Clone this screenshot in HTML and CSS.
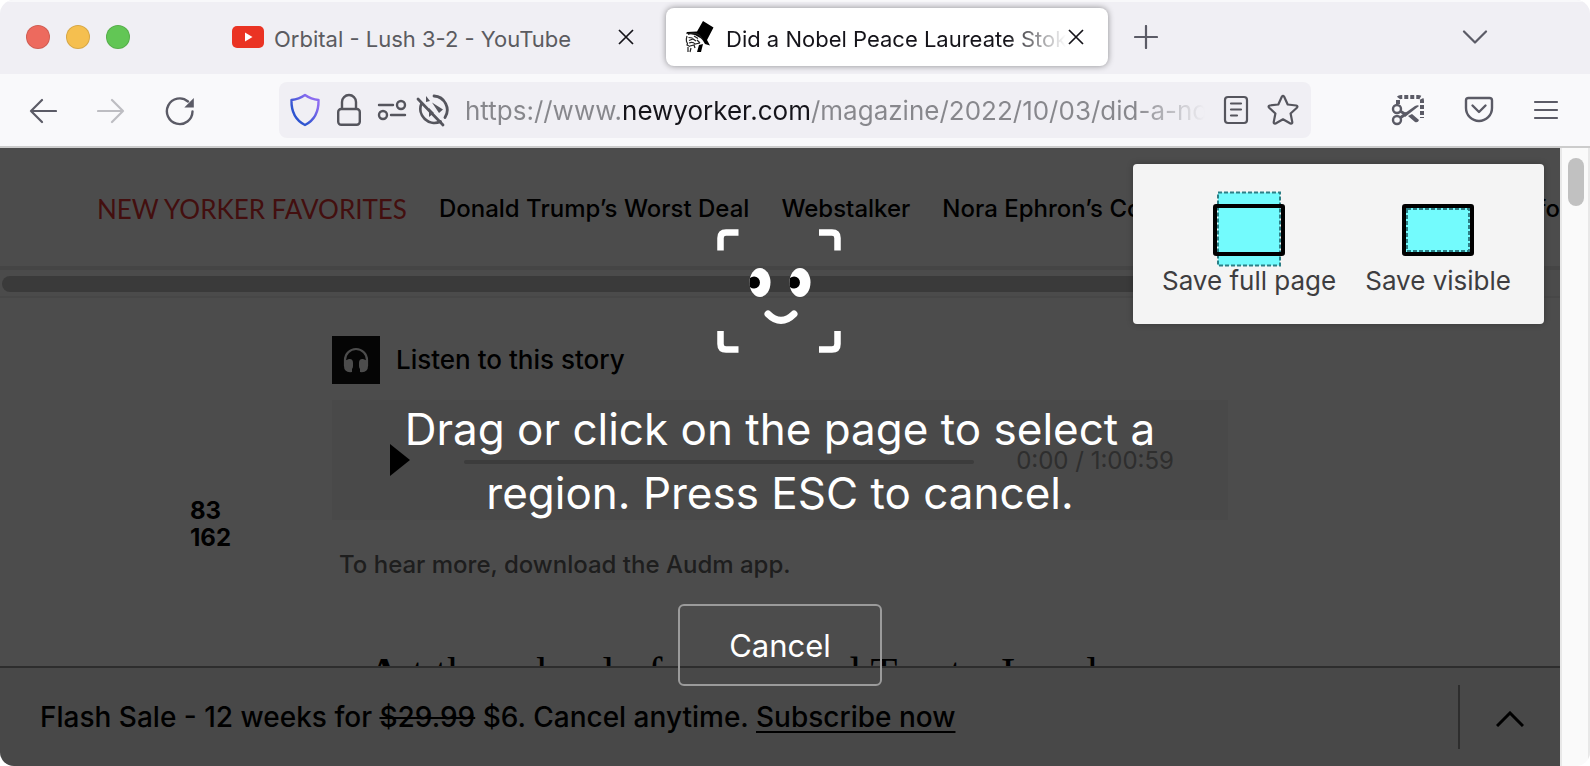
FILE: index.html
```html
<!DOCTYPE html>
<html lang="en">
<head>
<meta charset="utf-8">
<title>Did a Nobel Peace Laureate Stoke a Civil War?</title>
<link rel="stylesheet" href="styles.css">
</head>
<body>
<div class="window">
  <header class="tabbar">
    <div class="lights"><span class="light red"></span><span class="light yellow"></span><span class="light green"></span></div>
    <div class="tab">
      <svg class="fav" width="32" height="32" viewBox="0 0 32 32"><rect y="5" width="32" height="22" rx="5" fill="#ea3323"/><path d="M13 11.500v9l7.500-4.500z" fill="#fff"/></svg>
      <span class="tab-title">Orbital - Lush 3-2 - YouTube</span>
      <button class="icon-btn" aria-label="Close tab"><svg width="16" height="16" viewBox="0 0 16 16" stroke="#15141a" stroke-width="1.700"><path d="M1 1l14 14M15 1L1 15"/></svg></button>
    </div>
    <div class="tab active">
      <svg class="fav" width="32" height="32" viewBox="0 0 32 32"><path d="M19 0l10.500 6.500L23 19l3 5.500-5-1.500-3-5-7-4-9-1.500 1-1.500 10-.5z"/><path d="M4 13.500q6-3 11 .5l4 5M3 15q-1 3-.5 5.500l1 2L3 24l3 1.500M4.500 16.500l4 .5M5 19.500l4-1.500 3 2M10 15l4 2.500M5 22q4-1.500 6 1l5-1M13 19l3 3M6 25l4-1 1 3M4 26v5M7 27l-1 4" fill="none" stroke="#222" stroke-width="1.200"/><path d="M15 24l4-1-2 8h-4z"/></svg>
      <span class="tab-title">Did a Nobel Peace Laureate Stoke a Civil War?</span>
      <button class="icon-btn" aria-label="Close tab"><svg width="16" height="16" viewBox="0 0 16 16" stroke="#15141a" stroke-width="1.700"><path d="M1 1l14 14M15 1L1 15"/></svg></button>
    </div>
    <button class="icon-btn new-tab" aria-label="New tab"><svg width="24" height="24" viewBox="0 0 24 24" stroke="#5b5b66" stroke-width="2.200" stroke-linecap="round"><path d="M12 1v22M1 12h22"/></svg></button>
    <button class="icon-btn all-tabs" aria-label="List all tabs"><svg width="26" height="14" viewBox="0 0 26 14" fill="none" stroke="#5b5b66" stroke-width="2.200" stroke-linecap="round" stroke-linejoin="round"><path d="M2 1.500l11 11 11-11"/></svg></button>
  </header>

  <div class="toolbar">
    <div class="nav-buttons">
      <button class="icon-btn" aria-label="Back"><svg width="28" height="28" viewBox="0 0 28 28" fill="none" stroke="#5b5b66" stroke-width="2.200" stroke-linecap="round" stroke-linejoin="round"><path d="M27 14H2M13 3L2 14l11 11"/></svg></button>
      <button class="icon-btn" aria-label="Forward" disabled><svg width="28" height="28" viewBox="0 0 28 28" fill="none" stroke="#bdbdc2" stroke-width="2.200" stroke-linecap="round" stroke-linejoin="round"><path d="M1 14h25M15 3l11 11-11 11"/></svg></button>
      <button class="icon-btn" aria-label="Reload"><svg width="30" height="30" viewBox="0 0 30 30" fill="none" stroke="#5b5b66" stroke-width="2.400" stroke-linecap="round"><path d="M27.500 15.500A12.800 12.800 0 1 1 23 5.500"/><path d="M28.800 2v9.500h-9.500z" fill="#5b5b66" stroke="none"/></svg></button>
    </div>
    <div class="urlbar">
      <svg width="32" height="34" viewBox="0 0 32 34" fill="none"><defs><linearGradient id="sh" x1="1" y1="0" x2="0" y2="1"><stop offset=".2" stop-color="#8b6bf0"/><stop offset=".7" stop-color="#2f55d0"/></linearGradient></defs><path d="M16 2c4 2.800 8.500 4.500 13.500 5 .3 12-3.500 20-13.500 25C6 27 2.200 19 2.500 7 7.500 6.500 12 4.800 16 2z" stroke="url(#sh)" stroke-width="2.400" stroke-linejoin="round"/></svg>
      <svg width="26" height="34" viewBox="0 0 26 34" fill="none" stroke="#55555d" stroke-width="2.400"><rect x="2.200" y="16" width="21.600" height="15.800" rx="3"/><path d="M6 16V9a7 7 0 0 1 14 0v7"/></svg>
      <svg width="30" height="34" viewBox="0 0 30 34" fill="none" stroke="#55555d" stroke-width="2.400" stroke-linecap="round"><path d="M2 12h14M14 22h14"/><circle cx="24" cy="12" r="4"/><circle cx="6" cy="22" r="4"/></svg>
      <svg width="34" height="34" viewBox="0 0 34 34" fill="none" stroke="#55555d" stroke-width="2.800" stroke-linecap="round"><path d="M18 3A14 14 0 0 1 29 24.500M24.500 28.500A14 14 0 0 1 5.500 10.500"/><path d="M10 3v6l4-1z" fill="#55555d" stroke="none"/><path d="M2 6l25 26"/><path d="M16 9.500l11 7-4 3.500zM13 15v9l5-4z" fill="#55555d" stroke="none"/></svg>
      <input class="url" type="text" aria-label="Address" value="https://www.newyorker.com/magazine/2022/10/03/did-a-nobel-peace-laureate-stoke-a-civil-war">
      <svg width="26" height="30" viewBox="0 0 26 30" fill="none" stroke="#55555d" stroke-width="2.200" stroke-linecap="round"><rect x="2" y="2" width="22" height="26" rx="3"/><path d="M8 8.500h10M8 14.500h10M8 20.500h6"/></svg>
      <svg class="star" width="32" height="32" viewBox="0 0 32 32" fill="none" stroke="#55555d" stroke-width="2.200" stroke-linejoin="round"><path d="M14.800 2.800q1.200-1.800 2.400 0l3.500 7.700 8.500 1q2 .5.700 2.200l-6.300 5.800 1.700 8.600q.1 2-1.900 1.400L16 25.300l-7.400 4.200q-2 .6-1.900-1.400l1.700-8.600-6.300-5.800q-1.300-1.700.7-2.200l8.500-1z"/></svg>
    </div>
    <div class="tools">
      <button class="icon-btn" aria-label="Take screenshot"><svg width="34" height="32" viewBox="0 0 34 32" fill="none" stroke="#5b5b66"><path d="M7 10V6q0-3 3-3h17q4 0 4 4v17" stroke-width="4" stroke-dasharray="4 2"/><circle cx="6" cy="15" r="4" stroke-width="2.400"/><circle cx="6" cy="26" r="4" stroke-width="2.400"/><path d="M9 17l5 3M9 24l7-5" stroke-width="3"/><path d="M12 20.500L24 12q3-1.500 4 0L14 23zM17 22l4-2 7 6q-1 3-4 2z" fill="#5b5b66" stroke="none"/></svg></button>
      <button class="icon-btn" aria-label="Save to Pocket"><svg width="30" height="28" viewBox="0 0 30 28" fill="none" stroke="#5b5b66" stroke-width="2.400" stroke-linecap="round" stroke-linejoin="round"><path d="M4.500 2h21q2.500 0 2.500 2.500V12a13 13 0 0 1-26 0V4.500Q2 2 4.500 2z"/><path d="M8.500 9.500L15 16l6.500-6.500"/></svg></button>
      <button class="icon-btn" aria-label="Menu"><svg width="26" height="22" viewBox="0 0 26 22" stroke="#5b5b66" stroke-width="2.200" stroke-linecap="round"><path d="M2 3h22M2 11h22M2 19h22"/></svg></button>
    </div>
  </div>

  <div class="viewport">
    <main class="page">
      <nav class="favorites">
        <span class="fav-label">NEW YORKER FAVORITES</span>
        <a href="#">Donald Trump’s Worst Deal</a>
        <a href="#">Webstalker</a>
        <a href="#">Nora Ephron’s Cookbooks</a>
        <a href="#" class="last">Comfo</a>
      </nav>
      <div class="hscroll"><div class="hthumb"></div></div>
      <div class="story">
        <aside class="counts">83<br>162</aside>
        <article class="article">
          <h2 class="listen">
            <svg width="48" height="48" viewBox="0 0 48 48"><rect width="48" height="48" fill="#111"/><path d="M13 30v-6a11 11 0 0 1 22 0v6" fill="none" stroke="#fff" stroke-width="2.200"/><path d="M12 25l5-2q4-.5 4 4v3q0 2-1 3v3q-8 1-8-6zM36 25l-5-2q-4-.5-4 4v3q0 2 1 3v3q8 1 8-6z" fill="#fff"/></svg>
            Listen to this story
          </h2>
          <div class="player">
            <button class="icon-btn" aria-label="Play"><svg width="20" height="32" viewBox="0 0 20 32"><path d="M0 0l20 16L0 32z"/></svg></button>
            <div class="track"></div>
            <span class="time">0:00 / 1:00:59</span>
          </div>
          <p class="more">To hear more, download the Audm app.</p>
          <p class="lede"><span class="cap">A</span>t the school of severe and Trusts, Israel</p>
        </article>
      </div>
      <footer class="sale">
        <p>Flash Sale - 12 weeks for <s>$29.99</s> $6. Cancel anytime. <a href="#">Subscribe now</a></p>
        <button class="icon-btn expand" aria-label="Expand offer"><svg width="28" height="16" viewBox="0 0 28 16" fill="none" stroke="#000" stroke-width="3"><path d="M1 15L14 2l13 13"/></svg></button>
      </footer>
    </main>
    <div class="scrollbar"><div class="vthumb"></div></div>

    <div class="overlay">
      <svg width="126" height="124" viewBox="0 0 126 124" fill="none" stroke="#fff">
        <path d="M3.500 21.500V9q0-5.500 5.500-5.500h12.500M102 3.500h13q5.500 0 5.500 5.500v12.500M3.500 102v13q0 5.500 5.500 5.500h12.500M120.500 102v13q0 5.500-5.500 5.500h-13" stroke-width="6.500"/>
        <g stroke="none"><ellipse cx="43" cy="53.500" rx="10.500" ry="14.500" fill="#fff"/><ellipse cx="83" cy="53.500" rx="10.500" ry="14.500" fill="#fff"/><path d="M33 49a6 6 0 1 1 0 9q-1-4 0-9zM73 49a6 6 0 1 1 0 9q-1-4 0-9z" fill="#000"/></g>
        <path d="M51 85q13 13 26 0" stroke-width="7" stroke-linecap="round"/>
      </svg>
      <p class="hint">Drag or click on the page to select a region. Press ESC to cancel.</p>
      <button class="cancel">Cancel</button>
    </div>
    <div class="panel">
      <button class="save"><svg width="72" height="76" viewBox="0 0 72 76"><rect x="5" y="1.500" width="62" height="73" fill="#73fbfd" stroke="#2c7f86" stroke-width="2" stroke-dasharray="4 2"/><rect x="2" y="15" width="68" height="48" rx="1" fill="none" stroke="#000" stroke-width="4"/></svg>Save full page</button>
      <button class="save"><svg width="72" height="76" viewBox="0 0 72 76"><rect x="2" y="15" width="68" height="48" rx="1" fill="#73fbfd" stroke="#000" stroke-width="4"/><rect x="5" y="18" width="62" height="42" fill="none" stroke="#2c7f86" stroke-width="2" stroke-dasharray="4 2"/></svg>Save visible</button>
    </div>
  </div>
</div>
</body>
</html>
```
FILE: styles.css
```css
* { box-sizing: border-box; }
body { margin: 0; background: #fff; font-family: Inter, "Liberation Sans", sans-serif; color: #000; }
p, h2 { margin: 0; }
svg { display: block; flex: none; }
button { font: inherit; cursor: pointer; }
.icon-btn { display: flex; padding: 0; border: 0; background: none; }

.window { display: flex; flex-direction: column; height: 100vh; border-radius: 14px; overflow: hidden; }

.tabbar { display: flex; align-items: center; height: 74px; flex: none; background: #f0eff4; border-top: 2px solid #f8f8fa; padding: 0 0 2px 26px; }
.lights { display: flex; gap: 16px; width: 188px; }
.light { width: 24px; height: 24px; border-radius: 50%; border: 1px solid #0000001f; }
.red { background: #ed6a5e; }
.yellow { background: #f5bf4f; }
.green { background: #62c655; }
.tab { display: flex; align-items: center; width: 442px; height: 58px; padding: 0 22px 0 18px; border-radius: 8px; font-size: 22px; color: #5b5b60; }
.tab .fav { margin-right: 10px; }
.tab .icon-btn { margin-left: 2px; }
.tab-title { flex: 1; min-width: 0; padding-top: 3px; overflow: hidden; white-space: nowrap; line-height: 32px; }
.active { margin-left: 10px; padding-right: 24px; background: #fff; color: #15141a; box-shadow: 0 0 6px #0000006b; }
.active .tab-title { mask-image: linear-gradient(to left, transparent, #000 60px); }
.new-tab { margin-left: 26px; }
.all-tabs { margin-left: auto; margin-right: 102px; }

.toolbar { display: flex; align-items: center; height: 74px; flex: none; background: #f9f9fb; border-bottom: 2px solid #ccc; padding: 0 31px 0 29px; }
.nav-buttons { display: flex; align-items: center; gap: 40px; width: 250px; padding-top: 2px; }
.urlbar { flex: 1; min-width: 0; display: flex; align-items: center; gap: 15px; height: 56px; padding: 0 12px 0 10px; border-radius: 8px; background: #f0eff4; }
.urlbar svg:nth-of-type(4) { margin-left: -6px; }
.urlbar .star { margin-left: 3px; }
.url { flex: 1; min-width: 0; padding: 2px 0 0; border: 0; font: 26px/36px Inter, "Liberation Sans", sans-serif; color: transparent; background: linear-gradient(to right, #87878c 156px, #15141a 156px 346px, #87878c 346px 670px, transparent 740px); background-clip: text; -webkit-background-clip: text; outline: 0; }
.tools { display: flex; align-items: center; justify-content: flex-end; gap: 39px; width: 248px; }

.viewport { position: relative; flex: 1; min-height: 0; display: flex; }
.page { flex: 1; min-width: 0; display: flex; flex-direction: column; background: #fff; }
.scrollbar { width: 30px; padding: 10px 4px 0 6px; background: #fafafa; border: solid #e8e8e8; border-width: 0 2px; }
.vthumb { width: 16px; height: 48px; border-radius: 8px; background: #c1c1c1; }

.favorites { display: flex; align-items: center; gap: 32px; height: 122px; flex: none; padding: 3px 0 0 97px; border-bottom: 4px solid #e6e6e6; overflow: hidden; white-space: nowrap; font-size: 24px; font-weight: 500; }
.favorites a { color: #000; text-decoration: none; }
.fav-label { font-family: Lato, sans-serif; font-weight: 400; font-size: 26px; color: #df3333; }
.favorites .last { margin-left: auto; }
.hscroll { height: 28px; flex: none; padding: 6px 2px; background: #fafafa; border-bottom: 2px solid #ededed; }
.hthumb { width: 80%; height: 16px; border-radius: 8px; background: #c1c1c1; }

.story { flex: 1; min-height: 0; overflow: hidden; display: flex; padding: 38px 0 0 190px; }
.counts { width: 142px; padding-top: 161px; font-size: 24px; line-height: 27px; font-weight: 700; }
.article { width: 896px; }
.listen { display: flex; align-items: center; gap: 16px; font-size: 26px; line-height: 44px; font-weight: 500; }
.player { display: flex; align-items: center; height: 120px; margin-top: 16px; padding: 0 54px 0 58px; background: #f3f3f3; }
.track { flex: 1; height: 4px; margin: 4px 42px 0 54px; border-radius: 2px; background: #c8c8c8; }
.time { font-size: 24px; color: #999; }
.more { padding: 28px 7px; font-size: 24px; line-height: 34px; font-weight: 500; color: #676767; }
.lede { padding-left: 36px; margin-top: 34px; font: 44px/60px "Liberation Serif", serif; white-space: nowrap; }
.cap { margin-right: 12px; font-weight: 700; }

.sale { display: flex; align-items: center; justify-content: space-between; height: 100px; flex: none; padding-left: 40px; background: #f0f0f0; border-top: 2px solid #969696; font-size: 28px; font-weight: 500; }
.sale a { color: #000; text-underline-offset: 4px; text-decoration-thickness: 2px; }
.sale s { text-decoration-thickness: 2px; }
.expand { align-items: center; justify-content: center; width: 102px; height: 64px; padding-top: 4px; border-left: 2px solid #969696; }

.overlay { position: absolute; inset: 0 30px 0 0; display: flex; flex-direction: column; align-items: center; padding-top: 81px; background: rgba(0, 0, 0, 0.7); color: #fff; }
.hint { width: 800px; max-width: 100%; margin-top: 44px; text-align: center; font-size: 44px; line-height: 64px; }
.cancel { width: 204px; height: 82px; margin-top: 79px; border: 2px solid #9b9b9b; border-radius: 6px; background: none; color: #fff; font-size: 31px; }
.panel { position: absolute; top: 16px; right: 46px; display: flex; gap: 29px; padding: 27px 33px 0 29px; height: 160px; border-radius: 4px; background: #f4f4f4; box-shadow: 0 0 6px #00000040; }
.save { display: flex; flex-direction: column; align-items: center; padding: 0; border: 0; background: none; color: #3e3d40; font-size: 26px; line-height: 28px; align-self: flex-start; }
```
